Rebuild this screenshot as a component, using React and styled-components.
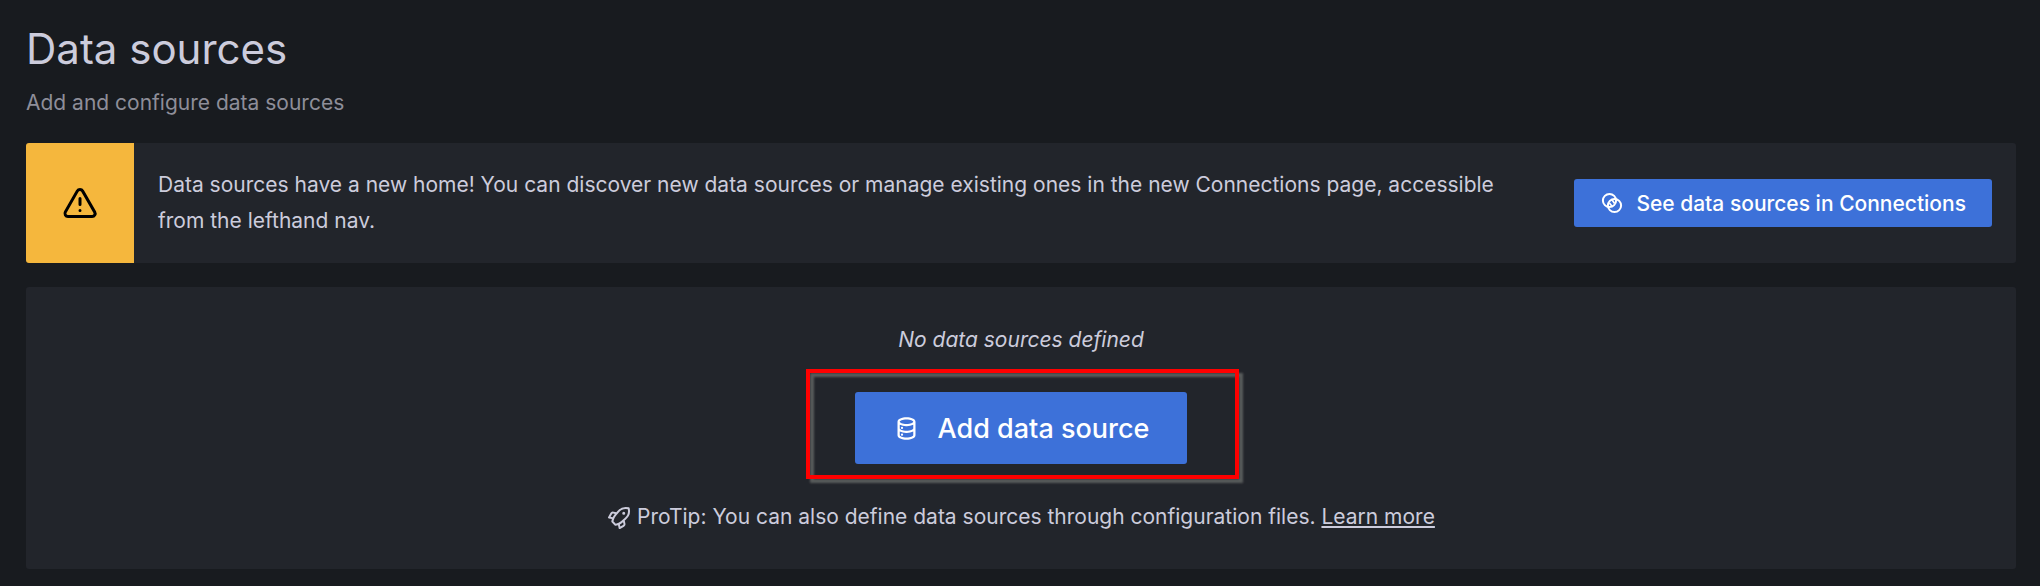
import React from 'react';
import styled, { createGlobalStyle } from 'styled-components';

const GlobalStyle = createGlobalStyle`
  *, *::before, *::after {
    box-sizing: border-box;
  }
  body {
    margin: 0;
    background: #181b1f;
    color: #ccccdc;
    font-family: Inter, Roboto, 'Liberation Sans', sans-serif;
    font-size: 21px;
    line-height: 33px;
  }
`;

const Page = styled.main`
  display: flex;
  flex-direction: column;
  gap: 24px;
  padding: 24px 24px 16px 26px;
`;

const Header = styled.header`
  display: flex;
  flex-direction: column;
  gap: 12px;
`;

const Title = styled.h1`
  margin: 0;
  font-size: 42px;
  font-weight: 400;
  line-height: 50px;
`;

const Subtitle = styled.p`
  margin: 0;
  color: #8e8e99;
`;

const Alert = styled.section`
  display: flex;
  align-items: stretch;
  min-height: 120px;
  border-radius: 3px;
  background: #22252b;
  overflow: hidden;
`;

const AlertIcon = styled.div`
  display: flex;
  flex: none;
  align-items: center;
  justify-content: center;
  width: 108px;
  background: #f5b73d;
  color: #000;
`;

const AlertText = styled.p`
  flex: 1;
  min-width: 0;
  margin: 0;
  padding: 24px;
  line-height: 36px;
`;

const AlertAction = styled.div`
  display: flex;
  flex: none;
  align-items: center;
  padding: 0 24px;
`;

const Button = styled.button`
  display: inline-flex;
  align-items: center;
  gap: ${({ $large }) => ($large ? 18 : 12)}px;
  height: ${({ $large }) => ($large ? 72 : 48)}px;
  padding: 0 ${({ $large }) => ($large ? 38 : 26)}px;
  border: 0;
  border-radius: 3px;
  background: #3d71d9;
  color: #fff;
  font-family: inherit;
  font-size: ${({ $large }) => ($large ? 27 : 21)}px;
  font-weight: 500;
  white-space: nowrap;
  cursor: pointer;
`;

const EmptyPanel = styled.section`
  display: flex;
  flex-direction: column;
  align-items: center;
  padding: 36px 24px;
  border-radius: 3px;
  background: #22252b;
  text-align: center;
`;

const EmptyTitle = styled.em`
  margin-bottom: 36px;
`;

const Highlighted = styled.div`
  position: relative;
  display: flex;
  margin-bottom: 36px;
`;

const HighlightFrame = styled.div`
  position: absolute;
  inset: -23px -52px -15px -49px;
  border: 4px solid #f00;
  filter: drop-shadow(4px 4px 1px #585b5b);
  pointer-events: none;
`;

const ProTip = styled.p`
  margin: 0;
`;

const TextLink = styled.a`
  color: inherit;
  text-decoration: underline;
`;

const Svg = styled.svg`
  flex: none;
  width: ${({ $size }) => $size}px;
  height: ${({ $size }) => $size}px;
  fill: currentColor;
  vertical-align: middle;
`;

function Icon({ size = 24, children }) {
  return (
    <Svg $size={size} viewBox="0 0 24 24" aria-hidden="true">
      {children}
    </Svg>
  );
}

function WarningIcon() {
  return (
    <Icon size={36}>
      <path d="M12,16a1,1,0,1,0,1,1A1,1,0,0,0,12,16Zm10.67,1.47-8.05-14a3,3,0,0,0-5.24,0l-8,14A3,3,0,0,0,3.94,22H20.06a3,3,0,0,0,2.61-4.53Zm-1.73,2a1,1,0,0,1-.88.51H3.94a1,1,0,0,1-.88-.51,1,1,0,0,1,0-1l8-14a1,1,0,0,1,1.78,0l8.05,14A1,1,0,0,1,20.94,19.49ZM12,8a1,1,0,0,0-1,1v4a1,1,0,0,0,2,0V9A1,1,0,0,0,12,8Z" />
    </Icon>
  );
}

function ConnectionsIcon() {
  return (
    <Icon>
      <g fill="none" stroke="currentColor" strokeWidth="2">
        <circle cx="9.5" cy="9.5" r="6.6" />
        <circle cx="14.5" cy="14.5" r="6.6" />
        <path d="M9.4 12l2.8 3.6M11.8 8.6l2.8 3.8" strokeWidth="1.7" />
      </g>
    </Icon>
  );
}

function DatabaseIcon() {
  return (
    <Icon size={27}>
      <path d="M8,16.5a1,1,0,1,0,1,1A1,1,0,0,0,8,16.5ZM12,2C8,2,4,3.37,4,6V18c0,2.63,4,4,8,4s8-1.37,8-4V6C20,3.37,16,2,12,2Zm6,16c0,.71-2.28,2-6,2s-6-1.29-6-2V14.73A13.16,13.16,0,0,0,12,16a13.16,13.16,0,0,0,6-1.27Zm0-6c0,.71-2.28,2-6,2s-6-1.29-6-2V8.73A13.16,13.16,0,0,0,12,10a13.16,13.16,0,0,0,6-1.27ZM12,8C8.28,8,6,6.71,6,6s2.28-2,6-2,6,1.29,6,2S15.72,8,12,8ZM8,10.5a1,1,0,1,0,1,1A1,1,0,0,0,8,10.5Z" />
    </Icon>
  );
}

function RocketIcon() {
  return (
    <Icon>
      <path d="M22.601 2.062a1 1 0 0 0-.713-.713A11.252 11.252 0 0 0 10.47 4.972L9.354 6.296 6.75 5.668a2.777 2.777 0 0 0-3.387 1.357l-2.2 3.9a1 1 0 0 0 .661 1.469l3.073.659a13.42 13.42 0 0 0-.555 2.434 1 1 0 0 0 .284.836l3.1 3.1a1 1 0 0 0 .708.293c.028 0 .057-.001.086-.004a12.169 12.169 0 0 0 2.492-.49l.644 3.004a1 1 0 0 0 1.469.661l3.905-2.202a3.035 3.035 0 0 0 1.375-3.304l-.668-2.76 1.237-1.137A11.204 11.204 0 0 0 22.6 2.062ZM3.572 10.723l1.556-2.76a.826.826 0 0 1 1.07-.375l1.718.416-.65.772a13.095 13.095 0 0 0-1.59 2.398Zm12.47 8.222-2.715 1.532-.43-2.005a11.34 11.34 0 0 0 2.414-1.62l.743-.683.404 1.664a1.041 1.041 0 0 1-.416 1.112Zm1.615-6.965-3.685 3.386a9.773 9.773 0 0 1-5.17 2.304l-2.405-2.404a10.932 10.932 0 0 1 2.401-5.206l1.679-1.993a.964.964 0 0 0 .078-.092L11.99 6.27a9.278 9.278 0 0 1 8.81-3.12 9.218 9.218 0 0 1-3.143 8.83Zm-.923-6.164a1.5 1.5 0 1 0 1.5 1.5 1.5 1.5 0 0 0-1.5-1.5Z" />
    </Icon>
  );
}

export default function App() {
  return (
    <>
      <GlobalStyle />
      <Page>
        <Header>
          <Title>Data sources</Title>
          <Subtitle>Add and configure data sources</Subtitle>
        </Header>
        <Alert role="alert">
          <AlertIcon>
            <WarningIcon />
          </AlertIcon>
          <AlertText>
            Data sources have a new home! You can discover new data sources or manage existing ones
            in the new Connections page, accessible from the lefthand nav.
          </AlertText>
          <AlertAction>
            <Button type="button">
              <ConnectionsIcon />
              See data sources in Connections
            </Button>
          </AlertAction>
        </Alert>
        <EmptyPanel>
          <EmptyTitle>No data sources defined</EmptyTitle>
          <Highlighted>
            <Button type="button" $large>
              <DatabaseIcon />
              Add data source
            </Button>
            <HighlightFrame />
          </Highlighted>
          <ProTip>
            <RocketIcon /> ProTip: You can also define data sources through configuration files.{' '}
            <TextLink href="#learn-more">Learn more</TextLink>
          </ProTip>
        </EmptyPanel>
      </Page>
    </>
  );
}
